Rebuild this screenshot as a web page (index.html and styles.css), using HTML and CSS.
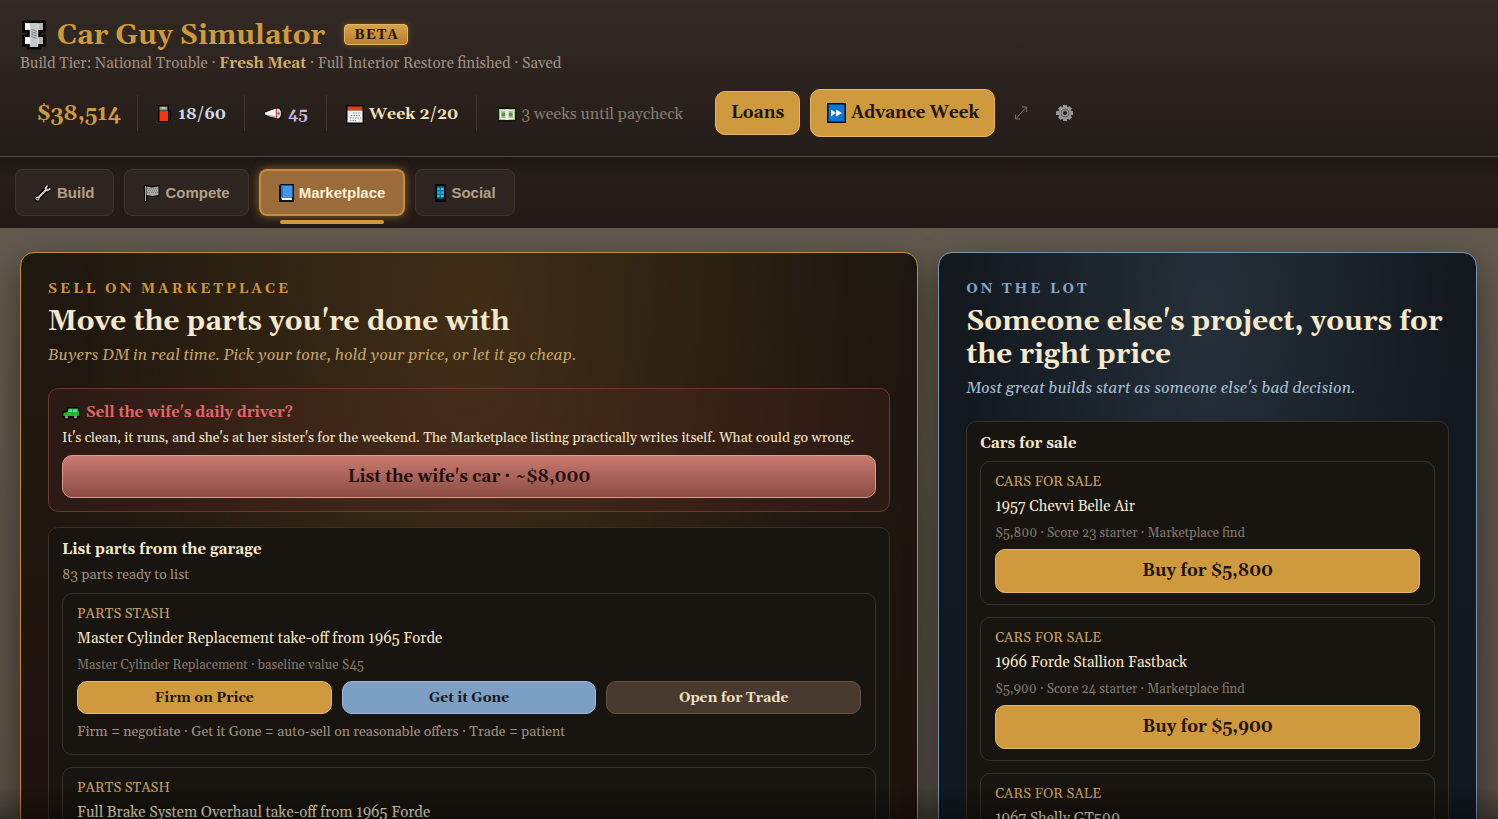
FILE: index.html
```html
<!DOCTYPE html>
<html lang="en">
<head>
<meta charset="utf-8">
<title>Car Guy Simulator</title>
<link rel="stylesheet" href="styles.css">
</head>
<body>
<div class="app">
  <header class="top">
    <div class="brand">
      <svg class="bolt" viewBox="0 0 26 32" aria-hidden="true">
        <path d="M2 2h22v10h-5v5h5v10h-5v3H7v-3H2V17h5v-5H2z" fill="#e3e3e3" stroke="#080808" stroke-width="3"/>
        <path d="M3.500 3.500h5v7h-5zM3.500 18.500h5v7h-5z" fill="#f5f5f5"/>
        <path d="M18 3.500h4.500v7H18zM18 18.500h4.500v7H18z" fill="#b5b5b5"/>
        <path d="M9 3.500h8v25H9z" fill="#c6c9cb"/>
        <path d="M10 10l6 2M10 12.500l6 2M10 15l6 2M10 17.500l6 2" stroke="#777" stroke-width="1"/>
      </svg>
      <h1>Car Guy Simulator</h1>
      <span class="beta">BETA</span>
    </div>
    <p class="status">Build Tier: National Trouble · <strong>Fresh Meat</strong> · Full Interior Restore finished · Saved</p>
    <div class="stats">
      <div class="stat cash">$38,514</div>
      <div class="stat fuel">
        <svg width="16" height="20" viewBox="0 0 16 20" aria-hidden="true"><path d="M1 1h11v5l2 2v8h-2v2H1z" fill="#050505"/><path d="M2.500 2.500h8v4h-8z" fill="#8d9a86"/><path d="M4.500 3.500h4v1h-4z" fill="#e8eee0"/><path d="M2.500 7h8.500v10H2.500z" fill="#fb3410"/><path d="M12 8h1v7h-1z" fill="#511a12"/></svg>18/60</div>
      <div class="stat fame">
        <svg width="19" height="18" viewBox="0 0 19 18" aria-hidden="true"><path d="M0 7L12 2l4 0 2 4v5l-2 4-4-1-4-1H5v-2L0 10z" fill="#120e0d"/><path d="M1 7.500L12 3.500v9L5 10.500 1 9.500z" fill="#f4efee"/><path d="M3 10l9 1.300V13l-7-1.500z" fill="#b6a9ac"/><ellipse cx="14" cy="8.500" rx="3" ry="5" fill="#ddd2d4"/><path d="M12.500 4v9" stroke="#bb4640"/><circle cx="14.500" cy="8.500" r="1.300" fill="#777"/></svg>45</div>
      <div class="stat week">
        <svg width="18" height="19" viewBox="0 0 18 19" aria-hidden="true"><path d="M0 0h18v19H0z" fill="#080808"/><path d="M1.500 1.500h15v4h-15z" fill="#e93b22"/><path d="M1.500 5.500h15v12h-15z" fill="#eee"/><path d="M7 8h8M5 10.500h10M4 13h11M4 15.500h6" stroke="#999" stroke-dasharray="1.500 1"/></svg>Week 2/20</div>
      <div class="stat pay">
        <svg width="18" height="15" viewBox="0 0 18 15" aria-hidden="true"><path d="M0 0h18v15H0z" fill="#10150d"/><path d="M1 2h16v11H1z" fill="#a8c68f"/><path d="M2.500 3.500h13v8h-13z" fill="none" stroke="#e3efd3"/><circle cx="5.500" cy="7.500" r="2" fill="#668b4f"/><circle cx="12.500" cy="7.500" r="2" fill="#668b4f"/><path d="M7.500 2h3v11h-3z" fill="#f2f2ea"/></svg>3 weeks until paycheck</div>
      <div class="actions">
        <button class="btn gold" type="button">Loans</button>
        <button class="btn gold advance" type="button">
          <svg width="19" height="20" viewBox="0 0 19 20" aria-hidden="true"><path d="M0 0h19v20H0z" fill="#0a0b0d"/><path d="M1.500 1.500h16v17h-16z" fill="#0877d6"/><path d="M4 6.500l5 3.500-5 3.500zM9 6.500l6 3.500-6 3.500z" fill="#fff"/></svg>Advance Week</button>
        <button class="icon-btn" type="button" aria-label="Expand"><svg width="14" height="16" viewBox="0 0 14 16" aria-hidden="true"><path d="M2 13.500L12 2.500M8 2h4.500v5M1.500 9.500V14H6" fill="none" stroke="#7a7168" stroke-width="1"/></svg></button>
        <button class="icon-btn" type="button" aria-label="Settings"><svg width="18" height="18" viewBox="-9 -9 18 18" aria-hidden="true"><circle r="6.500" fill="#989898"/><path d="M-2 -8h4v16h-4zM-8 -2h16v4H-16z" fill="#989898"/><path d="M-2 -8h4v16h-4zM-8 -2h16v4h-16z" transform="rotate(45)" fill="#989898"/><circle r="4" fill="none" stroke="#5c5a58"/><circle r="2" fill="#1d1a18"/></svg></button>
      </div>
    </div>
  </header>

  <nav class="tabs">
    <button class="tab" type="button"><svg width="18" height="18" viewBox="0 0 18 18" aria-hidden="true"><path d="M3 15L13 5" stroke="#050505" stroke-width="5" stroke-linecap="round"/><path d="M13.500 1.500l-2 3 2 2 3-2" fill="none" stroke="#050505" stroke-width="3.600"/><path d="M3.500 14.500L12.500 5.500" stroke="#d5d5d5" stroke-width="2" stroke-linecap="round"/><circle cx="3.500" cy="14.500" r="2" fill="#d5d5d5"/><path d="M13.500 1.500l-2 3 2 2 3-2" fill="none" stroke="#d5d5d5" stroke-width="1.600"/><circle cx="3.400" cy="14.600" r=".9" fill="#222"/></svg>Build</button>
    <button class="tab" type="button"><svg width="18" height="18" viewBox="0 0 17 18" aria-hidden="true"><path d="M0 1h3l5 1 8-1v11l-7 1-5-1v6H1z" fill="#0a0a0a"/><path d="M2 2v15" stroke="#a6a6a6" stroke-width="1"/><path d="M3 2.500l5 1 7-1v8.500l-6 1-6-1z" fill="#a6a6a6"/><path d="M3.500 4.500h11M4.500 6.500h10M3.500 8.500h11" stroke="#777" stroke-dasharray="1 1"/></svg>Compete</button>
    <button class="tab active" type="button" aria-current="page"><svg width="15" height="18" viewBox="0 0 15 18" aria-hidden="true"><path d="M1 0h14v18H0V2z" fill="#0a111b"/><path d="M2 1.500h11.500V13H2z" fill="#3f9ae9"/><path d="M2 1.500h2V13H2z" fill="#2379cc"/><path d="M2 13.500h11V16H3z" fill="#f3f5f7"/></svg>Marketplace</button>
    <button class="tab" type="button"><svg width="12" height="18" viewBox="0 0 12 18" aria-hidden="true"><rect x="1" width="11" height="18" rx="1" fill="#050a0d"/><path d="M3 2.500h7v12H3z" fill="#0e7ba5"/><path d="M3.500 4h2v2h-2zM7 4h2.500v2H7zM3.500 7.500h2v2h-2zM7 7.500h2.500v2H7zM3.500 11h2v2h-2zM7 11h2.500v2H7z" fill="#20c7ee"/></svg>Social</button>
  </nav>

  <main class="board">
    <section class="panel sell">
      <p class="eyebrow">Sell on Marketplace</p>
      <h2>Move the parts you're done with</h2>
      <p class="tagline">Buyers DM in real time. Pick your tone, hold your price, or let it go cheap.</p>

      <div class="box alert">
        <h3><svg width="18" height="14" viewBox="0 0 18 14" aria-hidden="true"><path d="M0 6l3-1 2-4h12l1 5v5l-2 1-1 2h-3l-1-2H7l-1 2H3l-1-2H0z" fill="#07110a"/><path d="M1.500 7l4-1 1-3.500h9.500l.8 3.500v4H1.500z" fill="#27b52f"/><path d="M7 3.500h3V6H6.300zM11 3.500h4l.5 2.500H11z" fill="#59d4df"/><circle cx="4.500" cy="11" r="1.500" fill="#999"/><circle cx="13.500" cy="11" r="1.500" fill="#999"/></svg>Sell the wife's daily driver?</h3>
        <p>It's clean, it runs, and she's at her sister's for the weekend. The Marketplace listing practically writes itself. What could go wrong.</p>
        <button class="btn red" type="button">List the wife's car · ~$8,000</button>
      </div>

      <div class="box">
        <h3>List parts from the garage</h3>
        <p class="count">83 parts ready to list</p>
        <div class="listing">
          <p class="kind">Parts stash</p>
          <h4>Master Cylinder Replacement take-off from 1965 Forde</h4>
          <p class="detail">Master Cylinder Replacement · baseline value $45</p>
          <div class="choices">
            <button class="btn small gold" type="button">Firm on Price</button>
            <button class="btn small blue" type="button">Get it Gone</button>
            <button class="btn small brown" type="button">Open for Trade</button>
          </div>
          <p class="note">Firm = negotiate · Get it Gone = auto-sell on reasonable offers · Trade = patient</p>
        </div>
        <div class="listing">
          <p class="kind">Parts stash</p>
          <h4>Full Brake System Overhaul take-off from 1965 Forde</h4>
        </div>
      </div>
    </section>

    <section class="panel lot">
      <p class="eyebrow">On the lot</p>
      <h2>Someone else's project, yours for the right price</h2>
      <p class="tagline">Most great builds start as someone else's bad decision.</p>

      <div class="box">
        <h3>Cars for sale</h3>
        <div class="listing">
          <p class="kind">Cars for sale</p>
          <h4>1957 Chevvi Belle Air</h4>
          <p class="detail">$5,800 · Score 23 starter · Marketplace find</p>
          <button class="btn gold" type="button">Buy for $5,800</button>
        </div>
        <div class="listing">
          <p class="kind">Cars for sale</p>
          <h4>1966 Forde Stallion Fastback</h4>
          <p class="detail">$5,900 · Score 24 starter · Marketplace find</p>
          <button class="btn gold" type="button">Buy for $5,900</button>
        </div>
        <div class="listing">
          <p class="kind">Cars for sale</p>
          <h4>1967 Shelly GT500</h4>
        </div>
      </div>
    </section>
  </main>
</div>
</body>
</html>
```
FILE: styles.css
```css
:root {
  --serif: Gelasio, Georgia, "Liberation Serif", serif;
  --gold: #cf9a3d;
  --cream: #f5e8cd;
  --muted: #a09280;
}

* { box-sizing: border-box; }

body, h1, h2, h3, h4, p { margin: 0; }

body {
  background: #241c18;
  color: var(--cream);
  font-family: var(--serif);
}

button { font-family: inherit; cursor: pointer; }
svg { flex: none; }

.app {
  position: relative;
  display: flex;
  flex-direction: column;
  height: 100vh;
  overflow: hidden;
}

.app::after {
  content: "";
  position: absolute;
  inset: auto 0 0;
  height: 32px;
  background: linear-gradient(transparent, rgba(0, 0, 0, 0.35));
  pointer-events: none;
}

/* Header */
.top {
  flex: none;
  padding: 16px 20px 20px;
  background: linear-gradient(#332a25, #241c18);
  border-bottom: 1px solid #54473b;
}

.brand { display: flex; align-items: center; height: 37px; }
.bolt { width: 28px; height: 30px; margin-right: 9px; }

h1 {
  margin-top: 3px;
  color: var(--gold);
  font-size: 28px;
  line-height: 34px;
}

.beta {
  margin-left: 19px;
  padding: 1px 8px 0 9px;
  border: 1px solid #e2b765;
  border-radius: 4px;
  background: linear-gradient(#d6a248, #ba7f30);
  box-shadow: 0 0 6px rgba(207, 154, 61, 0.4);
  color: #20150c;
  font-size: 14px;
  font-weight: bold;
  letter-spacing: 1px;
  line-height: 18px;
}

.status { color: var(--muted); font-size: 15px; line-height: 22px; }
.status strong { color: #d1ac66; }

.stats { display: flex; align-items: center; height: 46px; margin-top: 15px; }

.stat {
  display: flex;
  align-items: center;
  gap: 5px;
  height: 36px;
  padding: 2px 18px 0 19px;
  border-right: 1px solid #40362e;
  font-size: 16px;
  font-weight: bold;
  white-space: nowrap;
}

.cash { padding-left: 17px; padding-right: 16px; color: var(--gold); font-size: 21px; }
.fuel { color: #cbdbe8; }
.fame { color: #cdb4e2; }
.week { color: #f0dfb8; }
.pay { padding-left: 21px; border: 0; color: #877c6d; font-weight: normal; }

.actions { display: flex; align-items: center; gap: 10px; margin-left: 14px; }

.btn {
  border: 1px solid;
  border-radius: 10px;
  font-size: 17px;
  font-weight: bold;
  line-height: 22px;
  padding: 10px 15px;
}

.gold { border-color: #e5b663; background: #cf9a3d; color: #20140b; }
.blue { border-color: #9fb9d4; background: #7d9fc4; color: #14191f; }
.brown { border-color: #655344; background: #483a2e; color: #f0dfc2; }
.red { border-color: #dc9b8e; background: linear-gradient(#c97a70, #8b4c43); color: #27100d; }

.advance { display: flex; align-items: center; gap: 5px; padding: 12px 15px 12px 16px; }

.icon-btn {
  display: flex;
  padding: 0 9px;
  border: 0;
  background: none;
}

/* Tabs */
.tabs {
  flex: none;
  display: flex;
  gap: 10px;
  padding: 12px 15px;
  background: linear-gradient(#1e1714, #271d19 30%, #231a17);
}

.tab {
  position: relative;
  display: flex;
  align-items: center;
  gap: 5px;
  height: 47px;
  padding: 0 18px;
  border: 1px solid #42372f;
  border-radius: 8px;
  background: #2e2520;
  color: #b4a185;
  font-family: "Liberation Sans", Arial, sans-serif;
  font-size: 15px;
  font-weight: bold;
}

.active {
  border: 2px solid #c48d3c;
  background: #9b6b3a;
  box-shadow: 0 0 10px rgba(207, 154, 61, 0.6);
  color: #fff1d4;
}

.active::after {
  content: "";
  position: absolute;
  inset: auto 19px -10px;
  height: 4px;
  border-radius: 2px;
  background: #cf9a3d;
}

/* Panels */
.board {
  flex: 1;
  min-height: 0;
  display: grid;
  grid-template-columns: 5fr 3fr;
  gap: 20px;
  padding: 24px 21px 24px 20px;
  background: linear-gradient(#625a4d, #5c5347 50%, #594f45);
}

.panel {
  min-height: max-content;
  padding: 28px 27px 27px;
  border: 1px solid #c48c2e;
  border-radius: 14px;
  box-shadow: 0 12px 32px rgba(0, 0, 0, 0.45);
}

.sell {
  background:
    radial-gradient(ellipse 45% 120% at 50% 10%, rgba(100, 70, 30, 0.48), transparent),
    linear-gradient(#1f1810, #1f130d);
}

.lot {
  border-color: #7795ae;
  background:
    radial-gradient(ellipse 45% 90% at 50% 10%, rgba(60, 80, 95, 0.42), transparent),
    linear-gradient(#14191f, #101821);
}

.eyebrow {
  color: #cf973c;
  font-size: 14px;
  font-weight: bold;
  letter-spacing: 3px;
  line-height: 16px;
  text-transform: uppercase;
}

.lot .eyebrow { color: #86a6cc; }

h2 { margin-top: 9px; font-size: 28px; line-height: 33px; }

.tagline {
  margin: 6px 0 22px;
  color: #c4a46b;
  font-size: 16px;
  font-style: italic;
  line-height: 21px;
}

.lot .tagline { color: #a5bfd4; }

.box {
  padding: 13px;
  border: 1px solid #38322c;
  border-radius: 10px;
  background: #18140f;
}

.box + .box { margin-top: 15px; }

h3 { font-size: 15px; line-height: 17px; }

.alert { padding-top: 13px; border-color: #6b3a33; background: rgba(110, 50, 50, 0.17); }

.alert h3 {
  display: flex;
  align-items: center;
  gap: 6px;
  color: #e0666a;
  line-height: 21px;
}

.alert p { margin: 5px 0 6px; font-size: 14px; line-height: 21px; }
.alert .btn { display: block; width: 100%; padding: 11px 10px 9px; line-height: 21px; }

.count { margin-top: 9px; color: var(--muted); font-size: 14px; line-height: 17px; }

.listing {
  display: flex;
  flex-direction: column;
  gap: 7px;
  margin-top: 9px;
  padding: 12px 14px 11px;
  border: 1px solid #38322c;
  border-radius: 10px;
}

.listing + .listing { margin-top: 12px; }

.kind { color: #c3a168; font-size: 14px; line-height: 16px; text-transform: uppercase; }
h4 { font-size: 15px; font-weight: normal; line-height: 20px; }
.detail { color: #857a6c; font-size: 13px; line-height: 18px; }
.note { margin-top: 1px; color: var(--muted); font-size: 14px; line-height: 21px; }

.choices { display: grid; grid-template-columns: repeat(3, 1fr); gap: 10px; }
.small { padding: 7px 6px 5px; font-size: 14px; line-height: 19px; }
```
